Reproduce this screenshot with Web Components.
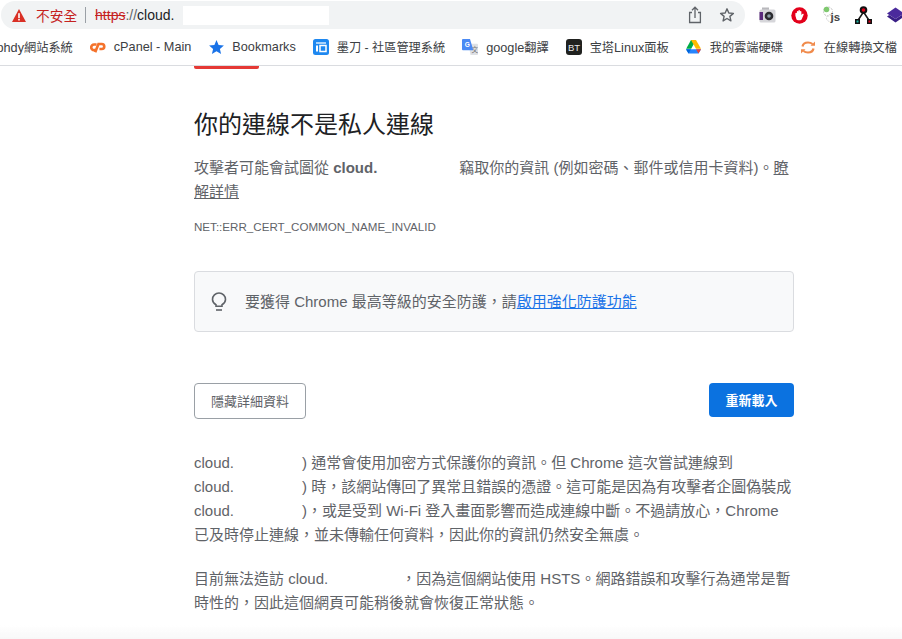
<!DOCTYPE html>
<html lang="zh-Hant">
<head>
<meta charset="utf-8">
<title>隱私權錯誤</title>
<style>
  html, body { margin: 0; padding: 0; background: #fff; height: 100%; overflow: hidden; }
  body { font-family: "Liberation Sans", "Noto Sans CJK TC", sans-serif; }
  bookmark-item span { font-size: 12.7px; }
  .fade { position: fixed; left: 0; right: 0; bottom: 0; height: 14px; background: linear-gradient(#fff0, #f8f8f8); pointer-events: none; }
</style>
</head>
<body>
<browser-toolbar></browser-toolbar>
<bookmark-bar>
  <bookmark-item style="margin-left:-12px"><span>phdy</span>網站系統</bookmark-item>
  <bookmark-item icon="cpanel"><span>cPanel - Main</span></bookmark-item>
  <bookmark-item icon="star"><span>Bookmarks</span></bookmark-item>
  <bookmark-item icon="modao">墨刀 - 社區管理系統</bookmark-item>
  <bookmark-item icon="gtrans"><span>google</span>翻譯</bookmark-item>
  <bookmark-item icon="bt">宝塔<span>Linux</span>面板</bookmark-item>
  <bookmark-item icon="drive">我的雲端硬碟</bookmark-item>
  <bookmark-item icon="convert">在線轉換文檔</bookmark-item>
</bookmark-bar>
<error-page>
  <span slot="title">你的連線不是私人連線</span>
</error-page>
<div class="fade"></div>

<script>
class BrowserToolbar extends HTMLElement {
  constructor() {
    super();
    this.attachShadow({ mode: 'open' });
    this.shadowRoot.innerHTML = `
      <style>
        :host { display: flex; align-items: center; height: 30px; box-sizing: border-box; padding: 1px 0 1px 1px; background: #fff; overflow: hidden; }
        .omni { width: 744px; height: 28px; box-sizing: border-box; background: #f1f3f4; border-radius: 14px;
          display: flex; align-items: center; padding: 0 10px 0 11px; flex: none; }
        .warn { width: 14px; height: 13px; flex: none; }
        .label { color: #c5221f; font-size: 13.7px; margin-left: 10px; white-space: nowrap; }
        .sep { width: 1px; height: 16px; background: #9aa0a6; margin: 0 9px 0 8px; flex: none; }
        .url { font-size: 14px; color: #202124; white-space: nowrap; }
        .url s { color: #c5221f; }
        .url i { font-style: normal; color: #5f6368; }
        .mask { width: 146px; height: 19px; background: #fff; margin-left: 9px; flex: none; }
        .grow { flex: 1; }
        .act { flex: none; display: block; }
        .exts { display: flex; align-items: center; gap: 15px; padding-left: 14px; flex: none; }
        .exts svg { display: block; flex: none; }
      </style>
      <div class="omni">
        <svg class="warn" viewBox="0 0 14 13"><path d="M7 0 14 13H0Z" fill="#d93025"/><rect x="6.200" y="4.200" width="1.600" height="4.800" fill="#fff"/><rect x="6.200" y="9.800" width="1.600" height="1.700" fill="#fff"/></svg>
        <span class="label">不安全</span>
        <span class="sep"></span>
        <span class="url"><s>https</s><i>://</i>cloud.</span>
        <span class="mask"></span>
        <span class="grow"></span>
        <svg class="act" width="16" height="18" viewBox="0 0 16 18" fill="none" stroke="#5f6368" stroke-width="1.300"><path d="M5 6.500H2.600v10h10.800v-10H11"/><path d="M8 12V1.500M5 4.200 8 1.200l3 3"/></svg>
        <svg class="act" style="margin-left:16px" width="16" height="16" viewBox="0 0 16 16" fill="none" stroke="#5f6368" stroke-width="1.400" stroke-linejoin="round"><path d="M8 1.800 9.800 6l4.600.4-3.500 3 1 4.500L8 11.500l-3.900 2.400 1-4.500-3.500-3L6.200 6Z"/></svg>
      </div>
      <div class="exts">
        <svg width="17" height="16" viewBox="0 0 17 16"><rect x="3" y="0.500" width="7" height="3" fill="#b8b8bc"/><rect x="0.500" y="2.500" width="16" height="13" rx="1.500" fill="#d6d6da"/><rect x="0.500" y="5" width="3.500" height="8" fill="#5a2a7c"/><circle cx="10" cy="9" r="4.300" fill="#2c2c30"/><circle cx="10" cy="9" r="1.800" fill="#8fa0aa"/></svg>
        <svg width="17" height="17" viewBox="0 0 17 17"><circle cx="8.500" cy="8.500" r="8.200" fill="#e3001b"/><path d="M4.400 8.800V6.200a.8.800 0 0 1 1.500 0V4.400a.8.800 0 0 1 1.500 0V3.500a.8.800 0 0 1 1.500 0v.9a.8.800 0 0 1 1.500 0V8l.9-1c.8-.7 1.700 0 1.300.7l-1.900 4.600q-.5 1-1.500 1H7.100q-1.200 0-1.700-1.100Z" fill="#fff"/></svg>
        <svg width="17" height="18" viewBox="0 0 17 18"><circle cx="5" cy="5.500" r="4.500" fill="none" stroke="#c4c4c4" stroke-width="1" stroke-dasharray="2 1"/><circle cx="3.500" cy="3.500" r="2.800" fill="#7fc96f"/><circle cx="7" cy="12" r="3.500" fill="none" stroke="#d4d4d4" stroke-dasharray="2 1"/><text x="7.500" y="14.500" font-size="11.500" font-weight="700" fill="#444" font-family="Liberation Sans">js</text></svg>
        <svg width="17" height="18" viewBox="0 0 17 18"><path d="M8.500 6 2.500 15M8.500 6l6 9" stroke="#1a1a1a" stroke-width="1.500" fill="none"/><circle cx="8.500" cy="4" r="3.800" fill="#111"/><circle cx="8.500" cy="4" r="1.800" fill="#e3001b"/><rect x="0" y="13" width="5" height="5" fill="#111"/><rect x="1.500" y="14.500" width="2" height="2" fill="#1fb5a8"/><rect x="12" y="13" width="5" height="5" fill="#111"/><rect x="13.500" y="14.500" width="2" height="2" fill="#e3001b"/></svg>
        <svg width="17" height="16" viewBox="0 0 17 16"><path d="M8.500 0.500 17 6.500 8.500 12 0 6.500Z" fill="#4a2a9c"/><path d="M0 9.500 8.500 15.500 17 9.500 14.800 8 8.500 12 2.200 8Z" fill="#3a1f86"/></svg>
      </div>`;
  }
}

class BookmarkBar extends HTMLElement {
  constructor() {
    super();
    this.attachShadow({ mode: 'open' });
    this.shadowRoot.innerHTML = `
      <style>
        :host { display: flex; align-items: center; height: 36px; box-sizing: border-box; padding-bottom: 1px; border-bottom: 1px solid #dadce0; overflow: hidden; background: #fff; white-space: nowrap; }
      </style>
      <slot></slot>`;
  }
}

const BOOKMARK_ICONS = {
  cpanel: `<svg width="16" height="11" viewBox="0 0 17 11" fill="none" stroke="#f4722b" stroke-width="2.800"><path d="M7 2.300H4.300a3 3 0 0 0 0 6H6"/><path d="M5.500 10.500 9 1.800h3.500a2.600 2.600 0 0 1 0 5.300H10"/></svg>`,
  star: `<svg width="15" height="14" viewBox="0 0 15 14"><path d="M7.500 0 9.600 4.900l5.300.5-4 3.500 1.200 5.100-4.600-2.700-4.600 2.700 1.200-5.100-4-3.500 5.300-.5Z" fill="#1a73e8"/></svg>`,
  modao: `<svg width="16" height="16" viewBox="0 0 16 16"><rect width="16" height="16" rx="2.500" fill="#1e88f0"/><rect x="3" y="3" width="10" height="2" fill="#a9d3fb"/><rect x="3" y="6.500" width="2" height="6" fill="#fff"/><rect x="7" y="6.500" width="6" height="6" fill="none" stroke="#fff" stroke-width="1.500"/></svg>`,
  gtrans: `<svg width="16" height="16" viewBox="0 0 17 17"><path d="M7 5h9a1 1 0 0 1 1 1v10a1 1 0 0 1-1 1H9Z" fill="#dfe1e5"/><text x="10" y="14" font-size="7" fill="#777" font-family="Liberation Sans, Noto Sans CJK TC">文</text><path d="M1 0h7.500L12 12H1a1 1 0 0 1-1-1V1a1 1 0 0 1 1-1Z" fill="#4a8af4"/><text x="2.800" y="8.500" font-size="7" font-weight="700" fill="#fff" font-family="Liberation Sans">G</text></svg>`,
  bt: `<svg width="16" height="16" viewBox="0 0 16 16"><rect width="16" height="16" rx="3" fill="#20211f"/><text x="8" y="11.500" font-size="9.500" text-anchor="middle" fill="#e8e8e8" font-family="Liberation Sans">BT</text></svg>`,
  drive: `<svg width="15" height="14" viewBox="0 0 15 14"><path d="M5 0h5L5.200 8.800H.2Z" fill="#00ac47"/><path d="M5 0h5l5 8.800h-5Z" fill="#ffba00"/><path d="M0 9.200h15l-2.500 4.300H2.500Z" fill="#2684fc"/><path d="M0 9.200 2.500 13.500 5 9.200Z" fill="#0066da"/><path d="M12.500 13.500 15 9.200h-5Z" fill="#ea4335"/></svg>`,
  convert: `<svg width="14" height="13" viewBox="0 0 14 13" fill="none" stroke="#f08a4b" stroke-width="2.200"><path d="M1.500 5.500C2 2.800 4 1.500 7 1.500c1.800 0 3.200.4 4.500 1.500"/><path d="M12.500 7.500C12 10.200 10 11.500 7 11.500c-1.800 0-3.200-.4-4.500-1.500"/><path d="M9.500 4.800H14V.5Z" fill="#f08a4b" stroke="none"/><path d="M4.500 8.200H0v4.300Z" fill="#f08a4b" stroke="none"/></svg>`
};

class BookmarkItem extends HTMLElement {
  constructor() {
    super();
    this.attachShadow({ mode: 'open' });
  }
  connectedCallback() {
    const icon = BOOKMARK_ICONS[this.getAttribute('icon')];
    this.shadowRoot.innerHTML = `
      <style>
        :host { display: inline-flex; align-items: center; flex: none; height: 28px; padding: 0 8.5px; font-size: 12.2px; color: #3c4043; }
        .ico { width: 16px; margin-right: 8px; display: flex; justify-content: center; flex: none; }
        svg { display: block; flex: none; }
      </style>
      ${icon ? `<div class="ico">${icon}</div>` : ''}<div><slot></slot></div>`;
  }
}

class HintPanel extends HTMLElement {
  constructor() {
    super();
    this.attachShadow({ mode: 'open' });
    this.shadowRoot.innerHTML = `
      <style>
        :host { display: flex; align-items: center; height: 61px; box-sizing: border-box; background: #f8f9fa; border: 1px solid #dadce0; border-radius: 4px; padding: 0 16px; color: #5f6368; font-size: 15px; }
        svg { display: block; flex: none; margin-right: 18px; }
        span { position: relative; top: -1px; }
        a { color: #1a73e8; text-decoration: underline; }
      </style>
      <svg width="16" height="20" viewBox="0 0 16 20" fill="none" stroke="#5f6368" stroke-width="1.600"><path d="M5 14.200v-1.500C3 11.500 1.500 9.800 1.500 7.500a6.500 6.500 0 0 1 13 0c0 2.300-1.500 4-3.500 5.200v1.500Z"/><path d="M5 18h6"/></svg>
      <span>要獲得 Chrome 最高等級的安全防護，請<a href="#">啟用強化防護功能</a></span>`;
  }
}

class ErrorPage extends HTMLElement {
  constructor() {
    super();
    this.attachShadow({ mode: 'open' });
    this.shadowRoot.innerHTML = `
      <style>
        :host { display: block; width: 600px; margin-left: 194px; color: #5f6368; font-size: 15px; }
        .stripe { width: 65px; height: 3px; background: #e53935; border-radius: 0 0 2px 2px; }
        h1 { margin: 40px 0 0; font-size: 24px; line-height: 32px; font-weight: 400; color: #202124; }
        p { margin: 0; line-height: 24px; }
        .intro { margin-top: 15px; }
        .intro a { color: #5f6368; }
        .code { margin-top: 13px; font-size: 11.6px; line-height: 20px; }
        hint-panel { margin-top: 34px; }
        .buttons { display: flex; justify-content: space-between; align-items: flex-start; margin-top: 51px; }
        .btn { height: 36px; box-sizing: border-box; border-radius: 4px; font-size: 13px; display: flex; align-items: center; padding: 0 16px 2px; }
        .hide { border: 1px solid #9aa0a6; color: #5f6368; background: #fff; }
        .reload { background: #0b72e0; color: #fff; font-weight: 700; height: 34px; padding: 0 16.5px 1px; }
        .details { margin-top: 32px; }
        .details p + p { margin-top: 20px; }
        .blank { display: inline-block; }
      </style>
      <div class="stripe"></div>
      <h1><slot name="title"></slot></h1>
      <p class="intro">攻擊者可能會試圖從 <b>cloud.</b><span class="blank" style="width:82px"></span>竊取你的資訊 (例如密碼、郵件或信用卡資料)。<a href="#">瞭</a><br><a href="#">解詳情</a></p>
      <div class="code">NET::ERR_CERT_COMMON_NAME_INVALID</div>
      <hint-panel></hint-panel>
      <div class="buttons">
        <div class="btn hide">隱藏詳細資料</div>
        <div class="btn reload">重新載入</div>
      </div>
      <div class="details">
        <p>cloud.<span class="blank" style="width:68px"></span>) 通常會使用加密方式保護你的資訊。但 Chrome 這次嘗試連線到<br>cloud.<span class="blank" style="width:68px"></span>) 時，該網站傳回了異常且錯誤的憑證。這可能是因為有攻擊者企圖偽裝成<br>cloud.<span class="blank" style="width:68px"></span>)，或是受到 Wi-Fi 登入畫面影響而造成連線中斷。不過請放心，Chrome<br>已及時停止連線，並未傳輸任何資料，因此你的資訊仍然安全無虞。</p>
        <p>目前無法造訪 cloud.<span class="blank" style="width:73px"></span>，因為這個網站使用 HSTS。網路錯誤和攻擊行為通常是暫<br>時性的，因此這個網頁可能稍後就會恢復正常狀態。</p>
      </div>`;
  }
}

customElements.define('browser-toolbar', BrowserToolbar);
customElements.define('bookmark-bar', BookmarkBar);
customElements.define('bookmark-item', BookmarkItem);
customElements.define('hint-panel', HintPanel);
customElements.define('error-page', ErrorPage);
</script>
</body>
</html>
